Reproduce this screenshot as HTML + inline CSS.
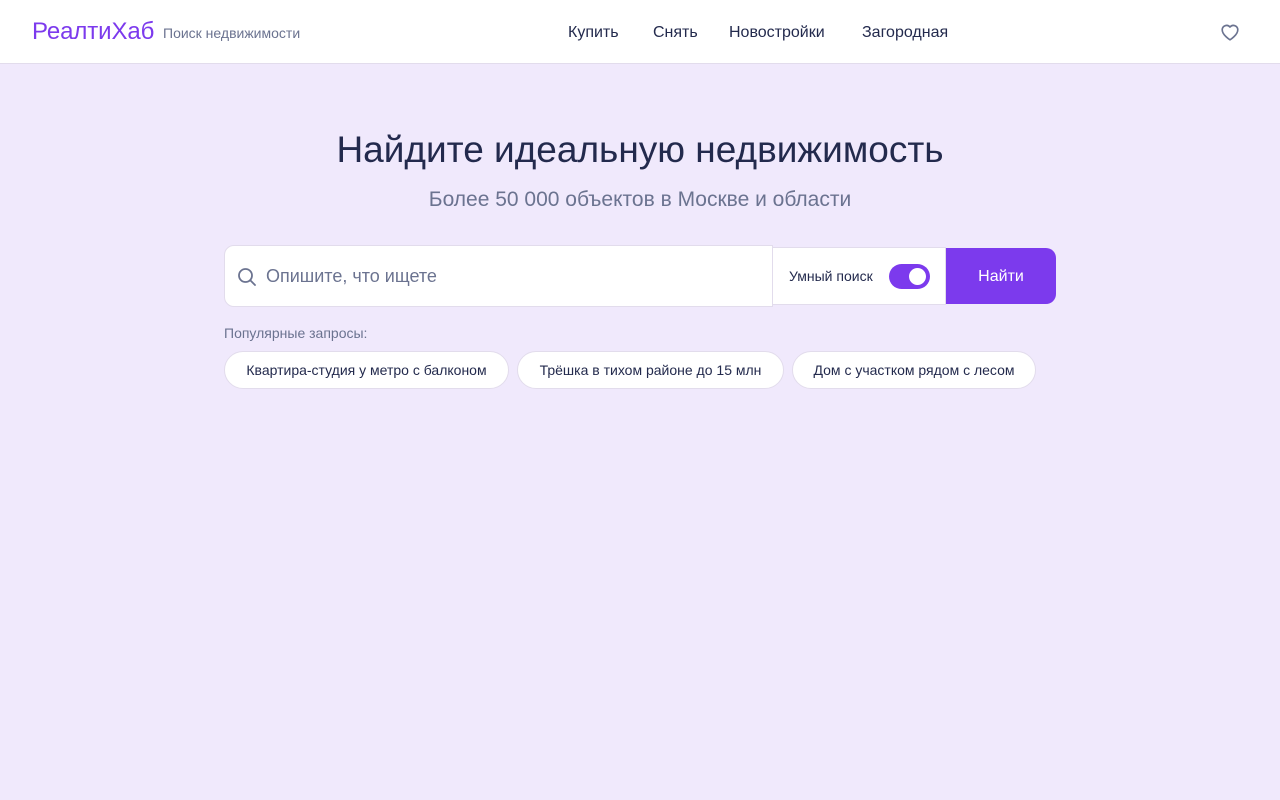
<!DOCTYPE html>
<html><head><meta charset="utf-8"><style>
*{box-sizing:border-box;margin:0;padding:0}
body{width:1280px;height:800px;background:#f0e9fc;font-family:"Liberation Sans",sans-serif;position:relative;overflow:hidden}
.hdr{position:absolute;left:0;top:0;width:1280px;height:64px;background:#fff;border-bottom:1px solid #e2dcec}
.logo{position:absolute;left:32px;top:18px;font-size:24px;color:#7c3aed;letter-spacing:-0.1px}
.tag{position:absolute;left:163px;top:25px;font-size:14px;color:#6b7390}
.nav{position:absolute;top:24px;font-size:16px;color:#232a4d}
h1{position:absolute;left:0;width:1280px;top:129px;text-align:center;font-weight:normal;font-size:37px;color:#232a4d}
.sub{position:absolute;left:0;width:1280px;top:188px;text-align:center;font-size:21px;color:#6b7390}
.inp{position:absolute;left:224px;top:245px;width:549px;height:62px;background:#fff;border:1px solid #e2dcec;border-radius:10px 0 0 10px}
.inp span{position:absolute;left:41px;top:20px;font-size:18px;color:#6b7390}
.tog{position:absolute;left:772px;top:247px;width:174px;height:58px;background:#fff;border:1px solid #e2dcec}
.tog span{position:absolute;left:16px;top:20px;font-size:14px;color:#232a4d}
.sw{position:absolute;left:116px;top:16px;width:41px;height:25px;border-radius:13px;background:#7c3aed}
.sw i{position:absolute;right:4px;top:4px;width:17px;height:17px;border-radius:50%;background:#fff}
.btn{position:absolute;left:946px;top:248px;width:110px;height:56px;background:#7c3aed;border-radius:0 10px 10px 0;color:#fff;font-size:16px;text-align:center;line-height:57px}
.pop{position:absolute;left:224px;top:325px;font-size:14px;color:#6b7390}
.chip{position:absolute;top:351px;height:38px;background:#fff;border:1px solid #e2dcec;border-radius:19px;font-size:14px;color:#232a4d;line-height:37px;text-align:center}
</style></head><body>
<div class="hdr">
<div class="logo">РеалтиХаб</div>
<div class="tag">Поиск недвижимости</div>
<div class="nav" style="left:568px">Купить</div>
<div class="nav" style="left:653px">Снять</div>
<div class="nav" style="left:729px">Новостройки</div>
<div class="nav" style="left:862px">Загородная</div>
<svg style="position:absolute;left:1219px;top:21px" width="22" height="22" viewBox="0 0 24 24" fill="none" stroke="#6b7390" stroke-width="1.8" stroke-linejoin="round"><path d="M12 20.5s-8.5-5.2-8.5-11A4.8 4.8 0 0 1 12 6.6a4.8 4.8 0 0 1 8.5 2.9c0 5.8-8.5 11-8.5 11z"/></svg>
</div>
<h1>Найдите идеальную недвижимость</h1>
<div class="sub">Более 50 000 объектов в Москве и области</div>
<div class="inp"><svg style="position:absolute;left:12px;top:21px" width="20" height="20" viewBox="0 0 20 20" fill="none" stroke="#6b7390" stroke-width="1.8"><circle cx="8.5" cy="8.5" r="6.5"/><path d="M13.5 13.5l4.5 4.5" stroke-linecap="round"/></svg><span>Опишите, что ищете</span></div>
<div class="tog"><span>Умный поиск</span><div class="sw"><i></i></div></div>
<div class="btn">Найти</div>
<div class="pop">Популярные запросы:</div>
<div class="chip" style="left:224px;width:285px">Квартира-студия у метро с балконом</div>
<div class="chip" style="left:517px;width:267px">Трёшка в тихом районе до 15 млн</div>
<div class="chip" style="left:792px;width:244px">Дом с участком рядом с лесом</div>
</body></html>
